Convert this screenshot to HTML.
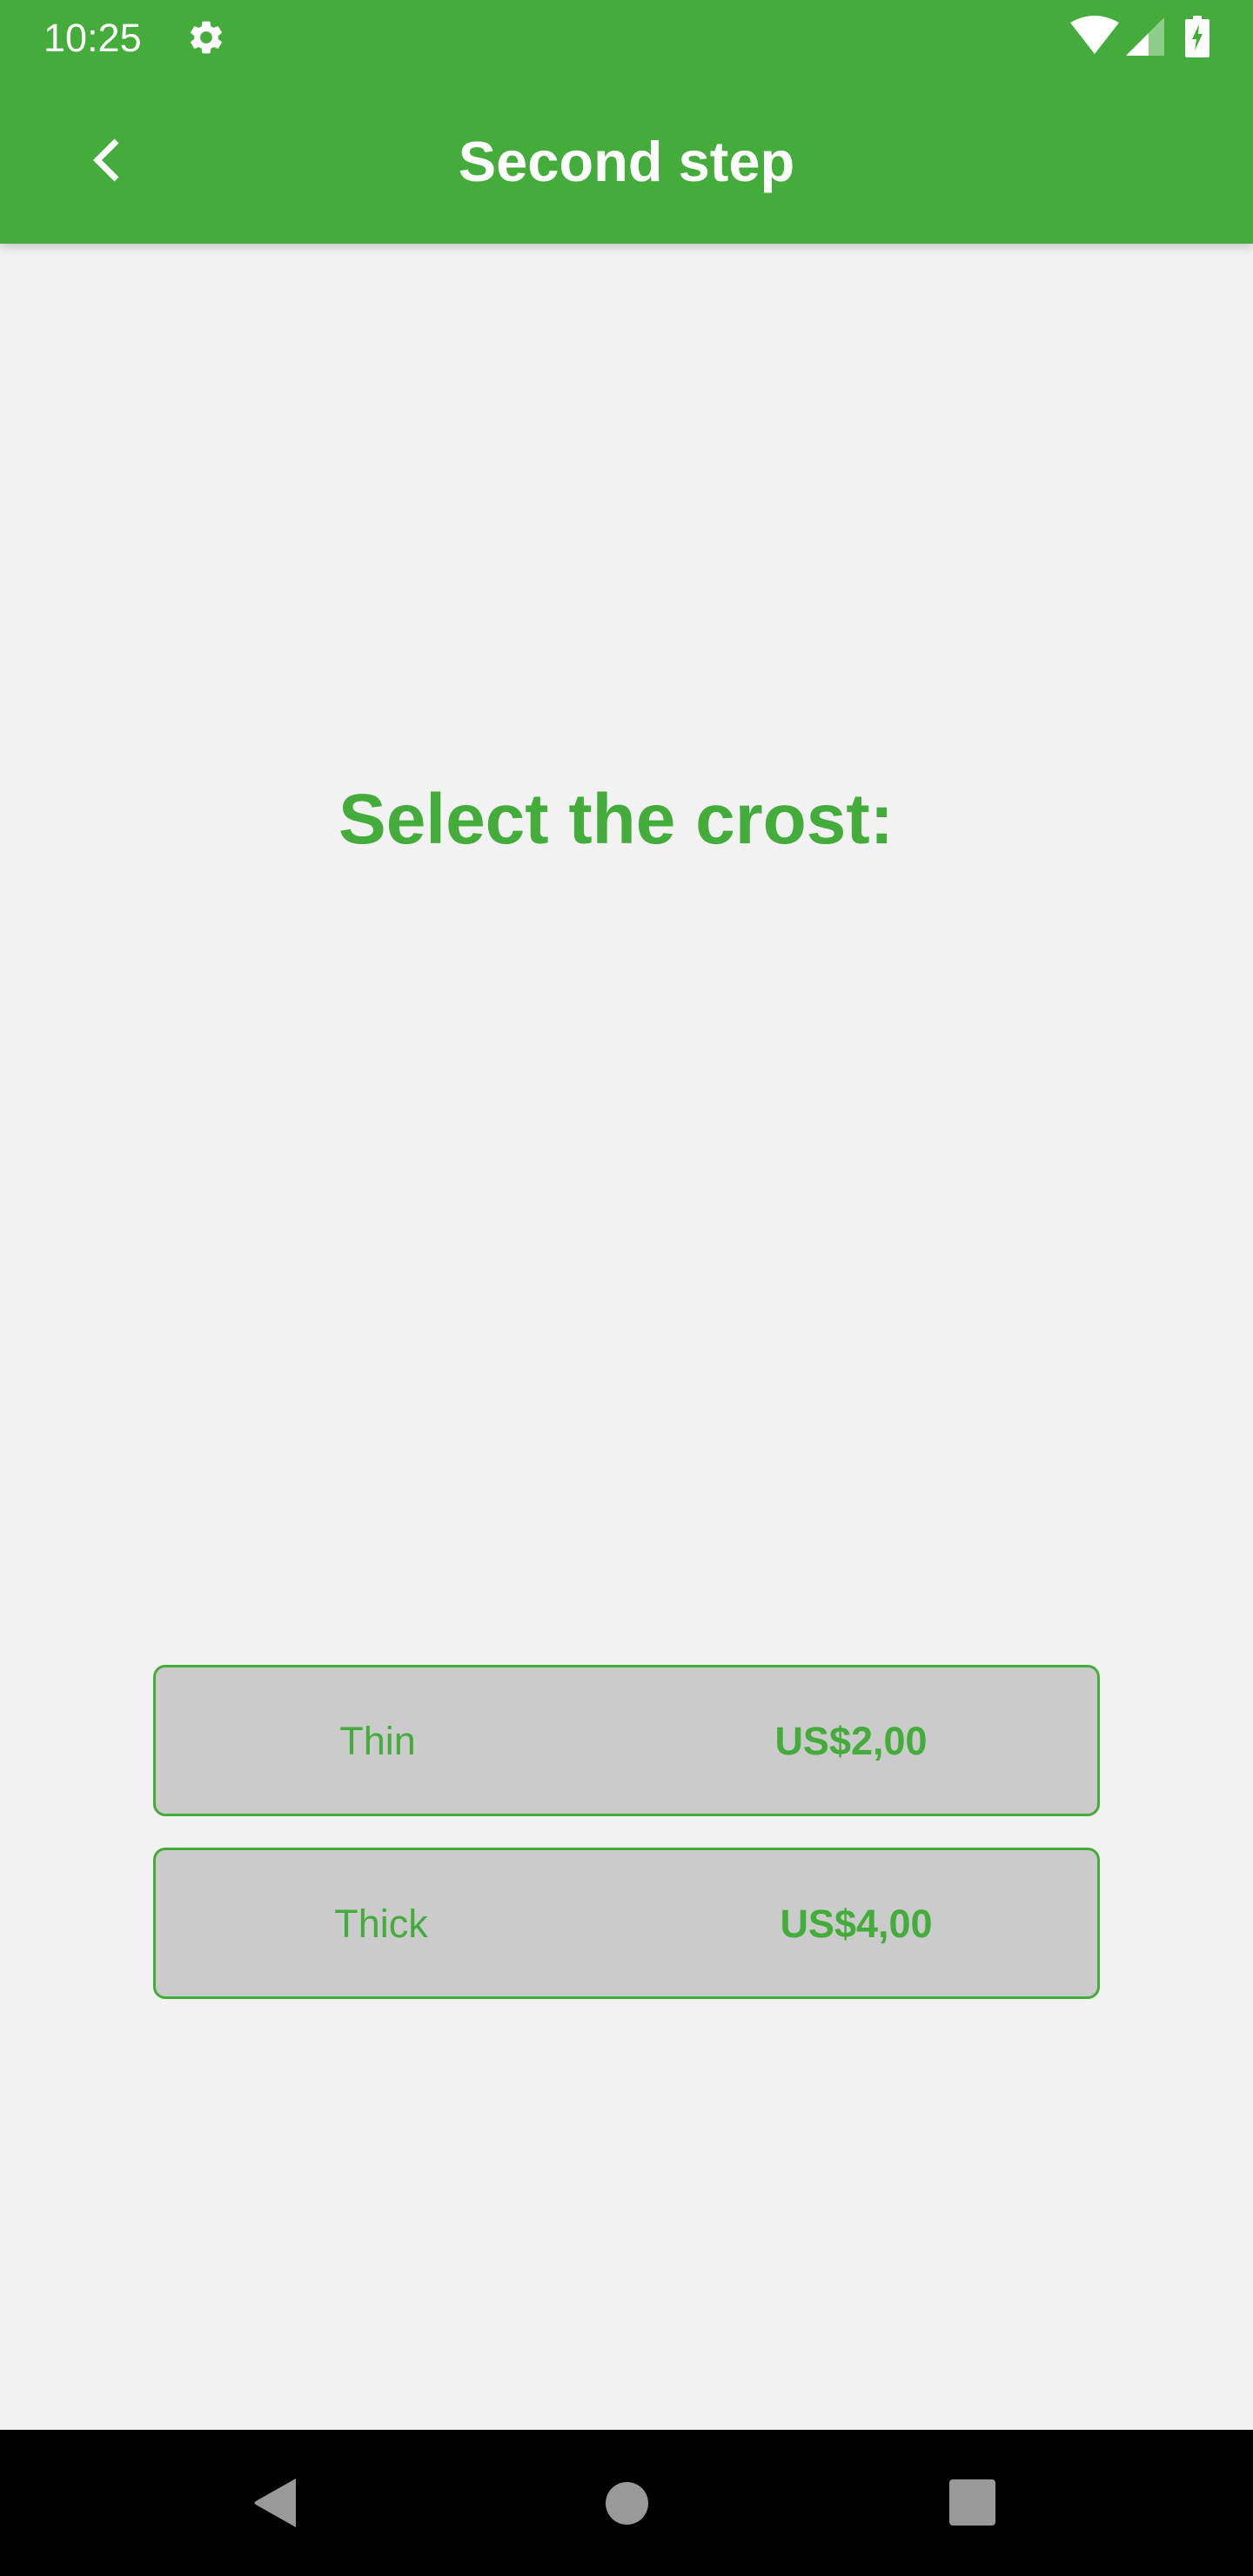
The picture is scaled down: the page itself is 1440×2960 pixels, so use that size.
<!DOCTYPE html>
<html><head><meta charset="utf-8"><style>
*{margin:0;padding:0;box-sizing:border-box}
body{width:1440px;height:2960px;background:#f2f2f2;position:relative;overflow:hidden;font-family:"Liberation Sans",Roboto,sans-serif}
.bar{position:absolute;left:0;top:0;width:1440px;height:280px;background:#43ac3a;box-shadow:0 4px 10px rgba(0,0,0,.18)}
.abs{position:absolute}
.time{left:50px;top:14px;color:#fff;font-size:45px;line-height:60px}
.title{left:0;width:1440px;top:146px;text-align:center;color:#fff;font-weight:bold;font-size:65px;line-height:80px}
.h{left:0;width:1416px;top:892px;text-align:center;color:#43ac3a;font-weight:bold;font-size:82px;line-height:100px}
.btn{position:absolute;left:176px;width:1088px;height:174px;background:#cbcbcb;border:3px solid #43ac3a;border-radius:14px}
.l,.r{position:absolute;top:0;line-height:170px;font-size:45px;color:#43ac3a;width:300px;text-align:center}
.r{font-weight:bold}
.nav{left:0;top:2792px;width:1440px;height:168px;background:#000}
</style></head><body>
<div class="bar"></div>
<div class="abs time">10:25</div>
<svg class="abs" style="left:214px;top:20px" width="46" height="46" viewBox="0 0 24 24"><path fill="#fff" d="M19.14 12.94c.04-.3.06-.61.06-.94 0-.32-.02-.64-.07-.94l2.03-1.58a.49.49 0 0 0 .12-.61l-1.920-3.32a.488.488 0 0 0-.59-.22l-2.39.96c-.5-.38-1.03-.7-1.62-.94l-.36-2.54a.484.484 0 0 0-.48-.41h-3.84c-.24 0-.43.17-.47.41l-.36 2.540c-.59.24-1.13.57-1.62.94l-2.39-.96c-.22-.08-.47 0-.59.22L2.74 8.87c-.12.21-.08.47.12.61l2.03 1.58c-.05.3-.09.63-.09.94s.2.64.07.94l-2.03 1.58a.49.49 0 0 0-.12.61l1.92 3.32c.12.22.37.29.59.22l2.39-.96c.5.38 1.03.7 1.62.94l.36 2.54c.05.24.24.41.48.41h3.84c.24 0 .44-.17.47-.41l.36-2.54c.59-.24 1.13-.56 1.62-.94l2.39.96c.22.08.47 0 .59-.22l1.92-3.32c.12-.22.07-.47-.12-.61l-2.01-1.58zM12 15.6c-1.98 0-3.6-1.62-3.6-3.6s1.62-3.6 3.6-3.6 3.6 1.62 3.6 3.6-1.62 3.6-3.6 3.6z"/></svg>
<svg class="abs" style="left:1228px;top:18px" width="60" height="46" viewBox="0 0 60 46"><path fill="#fff" d="M2 8 Q30 -8 58 8 L30 44 Z"/></svg>
<svg class="abs" style="left:1294px;top:20px" width="44" height="44" viewBox="0 0 44 44"><path fill="#fff" d="M0 44 L44 0 V44Z" opacity=".4"/><path fill="#fff" d="M0 44 L26 18 V44Z"/></svg>
<svg class="abs" style="left:1362px;top:18px" width="28" height="48" viewBox="0 0 28 48"><path fill="#fff" d="M9 0h10v4h7a2 2 0 0 1 2 2v40a2 2 0 0 1-2 2H2a2 2 0 0 1-2-2V6a2 2 0 0 1 2-2h7z"/><path fill="#43ac3a" d="M16 10 L8 27 H13 L11 40 L20 21 H15 Z"/></svg>
<svg class="abs" style="left:100px;top:158px" width="44" height="52" viewBox="0 0 44 52"><path d="M34 4 L12 26 L34 48" fill="none" stroke="#fff" stroke-width="7"/></svg>
<div class="abs title">Second step</div>
<div class="abs h">Select the crost:</div>
<div class="btn" style="top:1913px"><span class="l" style="left:105px">Thin</span><span class="r" style="left:649px">US$2,00</span></div>
<div class="btn" style="top:2123px"><span class="l" style="left:109px">Thick</span><span class="r" style="left:655px">US$4,00</span></div>
<div class="abs nav"></div>
<svg class="abs" style="left:288px;top:2846px" width="56" height="60" viewBox="0 0 56 60"><path fill="#999" d="M52 2 V58 L6 32 Q3 30 6 28 Z"/></svg>
<div class="abs" style="left:696px;top:2852px;width:49px;height:49px;border-radius:50%;background:#999"></div>
<div class="abs" style="left:1091px;top:2849px;width:53px;height:53px;border-radius:4px;background:#999"></div>
</body></html>
